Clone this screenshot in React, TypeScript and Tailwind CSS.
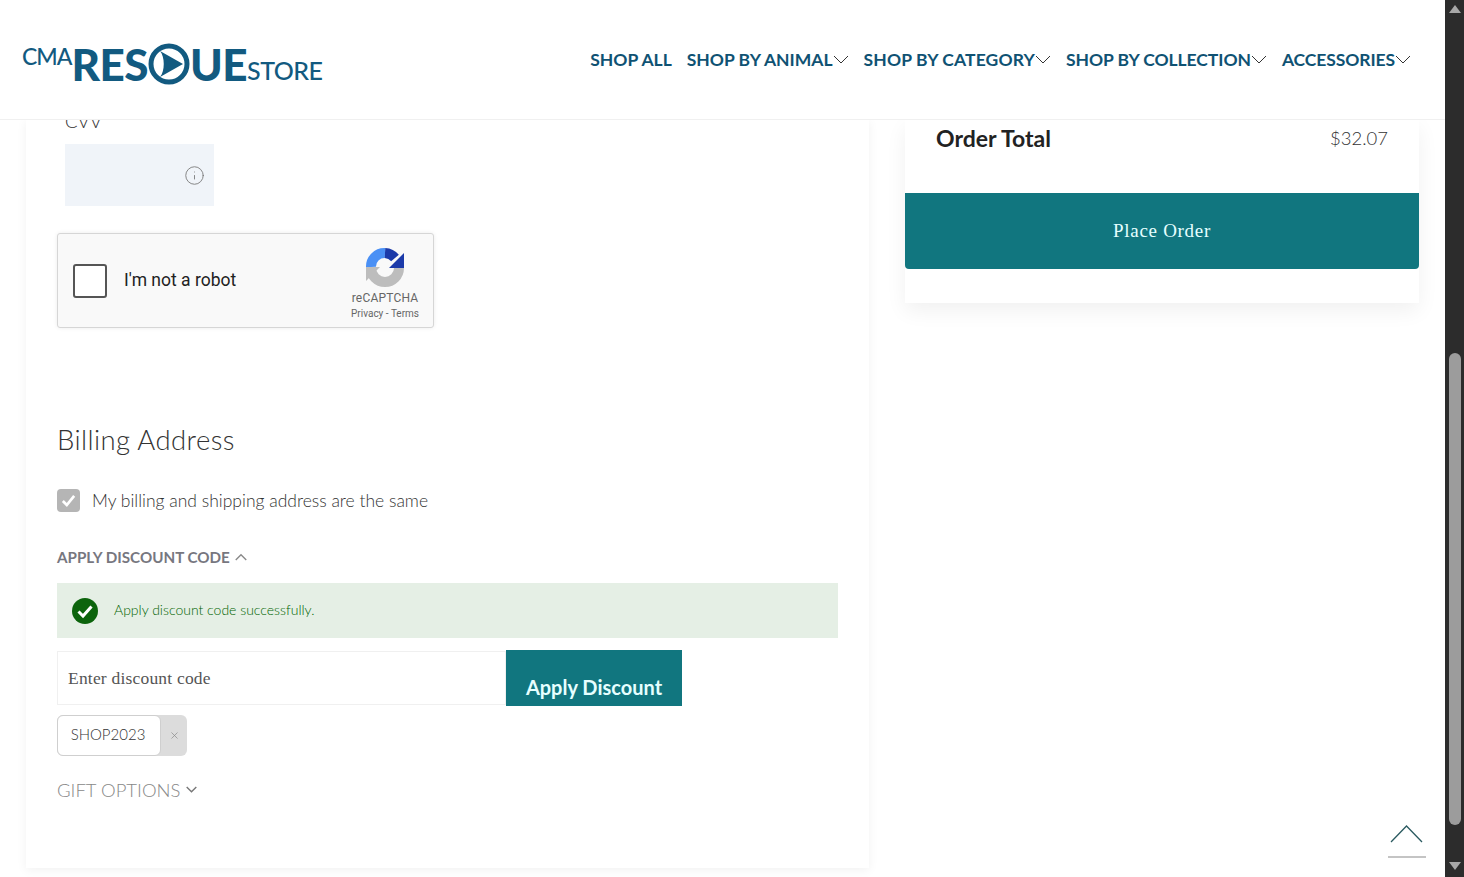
import { Info, X } from 'lucide-react';

const futura = "font-['Lato','Noto_Sans',sans-serif]";

const Chevron = ({ up = false, width, color, stroke }: { up?: boolean; width: number; color: string; stroke: number }) => (
  <svg width={width} height={width / 2 + 2} viewBox="0 0 16 10" fill="none">
    <path d={up ? 'M1 9 L8 2 L15 9' : 'M1 1 L8 8 L15 1'} stroke={color} strokeWidth={stroke} />
  </svg>
);

const NavItem = ({ label, arrow = true, tracking = '' }: { label: string; arrow?: boolean; tracking?: string }) => (
  <div className="flex items-center">
    <span className={`text-[17.5px] font-bold leading-none text-[#0f5273] ${tracking}`}>{label}</span>
    {arrow && <Chevron width={16} color="#333" stroke={1} />}
  </div>
);

const RecaptchaIcon = () => (
  <svg width="40" height="40" viewBox="0 0 40 40" fill="none">
    <path d="M6 20 A13.5 13.5 0 0 1 20 6" stroke="#4a90f5" strokeWidth="10" />
    <path d="M20 6 A14 14 0 0 1 30 11" stroke="#1c3aa9" strokeWidth="10" />
    <path d="M39 21 L39 6 L24 21 Z" fill="#1c3aa9" />
    <path d="M34 21 A14 14 0 0 1 6 21" stroke="#bdbdbd" strokeWidth="10" />
    <path d="M1 20 L1 34 L15 20 Z" fill="#bdbdbd" />
  </svg>
);

const Logo = () => (
  <div className="mt-[9px] flex items-baseline text-[#125a80]">
    <span className="mb-[18px] self-end text-[23px] font-medium leading-none tracking-[-1px] font-['Lato',sans-serif]">CMA</span>
    <span className="text-[44px] font-black leading-none tracking-[-0.5px] font-['Lato',sans-serif]">RES</span>
    <svg width="42" height="42" viewBox="0 0 42 42" className="self-center" fill="none">
      <circle cx="21" cy="21" r="18" stroke="#125a80" strokeWidth="5" />
      <path d="M12 8 C17 14 17 28 12 34 L35 21 Z" fill="#125a80" />
    </svg>
    <span className="text-[44px] font-black leading-none tracking-[-0.5px] font-['Lato',sans-serif]">UE</span>
    <span className="-translate-y-[1px] text-[25px] font-medium leading-none tracking-[-0.5px] font-['Lato',sans-serif]">STORE</span>
  </div>
);

export default function App() {
  return (
    <div className={`flex h-[877px] w-[1464px] overflow-hidden bg-white ${futura}`}>
      <div className="relative flex w-[1445px] flex-col">
        <header className="z-10 flex h-[120px] shrink-0 items-center justify-between border-b border-[#f0f0f0] bg-white pl-[22px] pr-[34px]">
          <Logo />
          <nav className="flex items-center gap-[15px]">
            <NavItem label="SHOP ALL" arrow={false} />
            <NavItem label="SHOP BY ANIMAL" />
            <NavItem label="SHOP BY CATEGORY" tracking="tracking-[0.12px]" />
            <NavItem label="SHOP BY COLLECTION" tracking="tracking-[-0.06px]" />
            <NavItem label="ACCESSORIES" tracking="tracking-[-0.1px]" />
          </nav>
        </header>

        <main className="flex items-start gap-[36px] pl-[26px]">
          {/* Left column */}
          <section className="h-[748px] w-[843px] pl-[31px] shadow-[0_2px_10px_rgba(0,0,0,0.06)]">
            <div className="-mt-[11px] pl-[8px] text-[18.5px] font-light leading-[24px] text-[#333]">CVV *</div>
            <div className="ml-[8px] mt-[11px] flex h-[62px] w-[149px] items-center justify-end bg-[#f0f4f9] pr-[9px]">
              <Info className="h-[21px] w-[21px] text-[#777]" strokeWidth={1} />
            </div>

            <div className="mt-[27px] flex h-[95px] w-[377px] items-center rounded-[3px] border border-[#d6d6d6] bg-[#f9f9f9] pl-[15px] pr-[14px] shadow-[0_0_4px_rgba(0,0,0,0.08)] font-['Roboto',sans-serif]">
              <div className="h-[34px] w-[34px] rounded-[3px] border-2 border-[#555] bg-white" />
              <span className="ml-[17px] text-[17.5px] text-[#222]">I'm not a robot</span>
              <div className="ml-auto flex flex-col items-center pt-[6px]">
                <RecaptchaIcon />
                <span className="mt-[4px] text-[12px] leading-[14px] tracking-[0.2px] text-[#666]">reCAPTCHA</span>
                <span className="mt-[3px] text-[10px] leading-[12px] text-[#666]">Privacy - Terms</span>
              </div>
            </div>

            <h2 className="mt-[92px] text-[27.5px] font-light leading-[40px] tracking-[0.4px] text-[#333]">Billing Address</h2>

            <div className="mt-[27px] flex items-center">
              <div className="flex h-[23px] w-[23px] items-center justify-center rounded-[4px] bg-[#b5b5b5]">
                <svg width="17" height="17" viewBox="0 0 15 15" fill="none">
                  <path d="M2.5 8 L6 11.5 L12.5 3.5" stroke="#fff" strokeWidth="2.4" />
                </svg>
              </div>
              <span className="ml-[12px] pt-[2px] text-[17.5px] font-light leading-[24px] text-[#333]">My billing and shipping address are the same</span>
            </div>

            <div className="mt-[32px] flex items-center gap-[5px]">
              <span className="text-[15.2px] font-bold leading-[24px] text-[#77777f]">APPLY DISCOUNT CODE</span>
              <Chevron up width={12} color="#888" stroke={1.8} />
            </div>

            <div className="mt-[14px] flex h-[55px] w-[781px] items-center bg-[#e5efe5] pl-[15px]">
              <svg width="26" height="26" viewBox="0 0 26 26">
                <circle cx="13" cy="13" r="13" fill="#0c640c" />
                <path d="M6.5 13.5 L11 18 L19.5 8.5" stroke="#fff" strokeWidth="3" fill="none" />
              </svg>
              <span className="mb-[2px] ml-[16px] text-[14px] font-light leading-[20px] text-[#006400]">Apply discount code successfully.</span>
            </div>

            <div className="mt-[12px] flex items-start">
              <div className="mt-[1px] flex h-[54px] w-[449px] items-center border border-[#f0f0f0] pl-[10px] font-['Liberation_Serif',serif] text-[17.5px] font-medium tracking-[0.2px] text-[#555]">
                Enter discount code
              </div>
              <div className="flex h-[56px] w-[176px] items-end justify-center bg-[#11767f] pb-[6px] text-[20px] font-bold leading-[26px] text-[#e6ffff]">
                Apply Discount
              </div>
            </div>

            <div className="mt-[9px] flex h-[41px] w-[130px] rounded-[6px] bg-[#dcdcdc]">
              <div className="flex w-[104px] items-center justify-center rounded-[6px] border border-[#cfcfcf] bg-white pb-[3px] pr-[2px] text-[15px] font-light text-[#333]">
                SHOP2023
              </div>
              <div className="flex flex-1 items-center justify-center">
                <X className="h-[11px] w-[11px] text-[#888]" strokeWidth={1.5} />
              </div>
            </div>

            <div className="mt-[21px] flex items-center gap-[6px]">
              <span className="text-[18.5px] font-light leading-[26px] text-[#888]">GIFT OPTIONS</span>
              <Chevron width={11} color="#777" stroke={2} />
            </div>
          </section>

          {/* Right column */}
          <aside className="h-[183px] w-[514px] shadow-[0_8px_20px_rgba(0,0,0,0.06)]">
            <div className="flex h-[73px] items-center justify-between pb-[37px] pl-[31px] pr-[31px]">
              <span className="text-[23px] font-bold leading-none text-[#222]">Order Total</span>
              <span className="text-[18.5px] font-light leading-none text-[#333]">$32.07</span>
            </div>
            <div className="flex h-[76px] items-center justify-center rounded-b-[4px] bg-[#11767f] font-['Liberation_Serif',serif] text-[19px] tracking-[0.7px] text-[#e6ffff]">
              Place Order
            </div>
          </aside>
        </main>

        {/* Back to top */}
        <div className="absolute bottom-[19px] right-[19px] w-[38px] border-b-2 border-[#c4c4c4] pb-[13px]">
          <svg width="38" height="18" viewBox="0 0 38 18" fill="none">
            <path d="M3 17 L18.5 1 L34 17" stroke="#2a5a60" strokeWidth="1.3" />
          </svg>
        </div>
      </div>

      {/* Scrollbar */}
      <div className="flex w-[19px] shrink-0 flex-col items-center bg-[#2c2c2c]">
        <div className="mt-[5px] h-0 w-0 border-x-[6px] border-b-[8px] border-x-transparent border-b-[#a8a8a8]" />
        <div className="mt-[340px] h-[472px] w-[12px] rounded-[6px] bg-[#9c9c9c]" />
        <div className="mt-[37px] h-0 w-0 border-x-[6px] border-t-[8px] border-x-transparent border-t-[#a8a8a8]" />
      </div>
    </div>
  );
}
